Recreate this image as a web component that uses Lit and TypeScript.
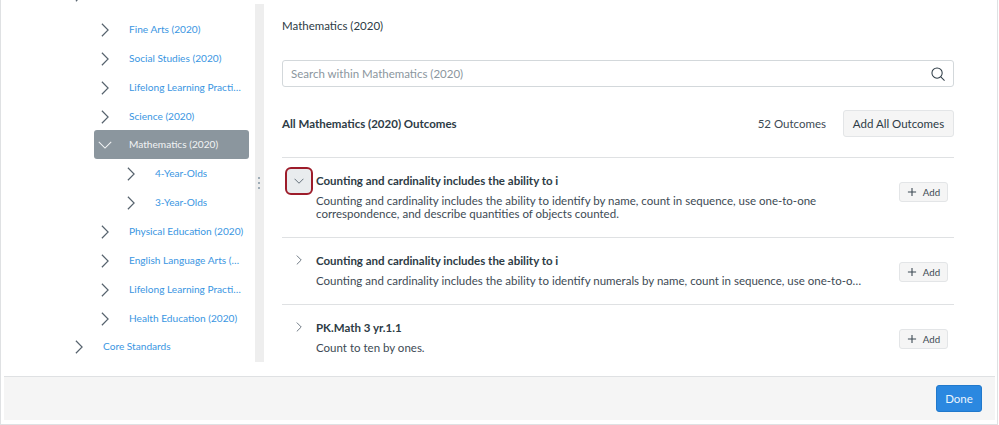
import { LitElement, html, css, svg } from "lit";
import { customElement } from "lit/decorators.js";

const chevRight = svg`<polyline points="1,1 9,9 1,17" fill="none" stroke="currentColor" stroke-width="1.5"/>`;
const chevDown = svg`<polyline points="1,1 9,9 17,1" fill="none" stroke="currentColor" stroke-width="1.3"/>`;

interface TreeRow { label: string; level: number; active?: boolean; }

const stub: TreeRow = { label: "Learning Standards and Early Years (2020)", level: 0 };

const rows: TreeRow[] = [
  { label: "Fine Arts (2020)", level: 1 },
  { label: "Social Studies (2020)", level: 1 },
  { label: "Lifelong Learning Practices (2020)", level: 1 },
  { label: "Science (2020)", level: 1 },
  { label: "Mathematics (2020)", level: 1, active: true },
  { label: "4-Year-Olds", level: 2 },
  { label: "3-Year-Olds", level: 2 },
  { label: "Physical Education (2020)", level: 1 },
  { label: "English Language Arts (2020)", level: 1 },
  { label: "Lifelong Learning Practices (2020)", level: 1 },
  { label: "Health Education (2020)", level: 1 },
  { label: "Core Standards", level: 0 },
];

const outcomes = [
  {
    title: "Counting and cardinality includes the ability to i",
    open: true,
    desc: "Counting and cardinality includes the ability to identify by name, count in sequence, use one-to-one correspondence, and describe quantities of objects counted.",
  },
  {
    title: "Counting and cardinality includes the ability to i",
    open: false,
    desc: "Counting and cardinality includes the ability to identify numerals by name, count in sequence, use one-to-one correspondence, and describe quantities.",
  },
  { title: "PK.Math 3 yr.1.1", open: false, desc: "Count to ten by ones." },
];

@customElement("app-root")
export class AppRoot extends LitElement {
  static styles = css`
    :host {
      display: block;
      width: 999px;
      height: 425px;
      overflow: hidden;
      box-sizing: border-box;
      background: #fff;
      font-family: Lato, "Liberation Sans", sans-serif;
      color: #2d3b45;
    }
    .frame {
      box-sizing: border-box;
      width: 998px;
      height: 425px;
      border: 1px solid #dfe1e3;
      border-top: none;
      padding: 0 2px 3px 3px;
      display: flex;
      flex-direction: column;
    }
    .main {
      height: 376px;
      flex: none;
      display: flex;
      overflow: hidden;
    }
    .tree {
      width: 251px;
      flex: none;
      height: 376px;
      overflow: hidden;
    }
    .stub {
      height: 14.5px;
      overflow: hidden;
    }
    .stub .tree-row {
      margin-top: -20.5px;
    }
    .tree-row {
      height: 28.87px;
      display: flex;
      align-items: center;
      box-sizing: border-box;
      font-size: 10.15px;
      color: #3a96e2;
    }
    .tree-row .arrow {
      color: #56626d;
      flex: none;
      display: flex;
      padding-top: 2px;
    }
    .tree-row .label {
      white-space: nowrap;
      overflow: hidden;
      text-overflow: ellipsis;
    }
    .l0 { padding-left: 71px; }
    .l0 .arrow { width: 28px; }
    .l0 .label { width: 140px; }
    .l1 { padding-left: 97px; }
    .l1 .arrow { width: 28px; }
    .l1 .label { width: 115px; }
    .l2 { padding-left: 123px; }
    .l2 .arrow { width: 28px; }
    .active {
      margin-left: 90px;
      width: 155px;
      padding-left: 4px;
      background: #8b969e;
      border-radius: 3px;
      color: #f2f4f5;
    }
    .active .arrow {
      color: #f2f4f5;
      width: 31px;
    }
    .grip-bar {
      width: 9px;
      flex: none;
      height: 358px;
      margin-top: 4px;
      background: #eeeeee;
      position: relative;
    }
    .dots {
      position: absolute;
      top: 173px;
      left: 3px;
      display: flex;
      flex-direction: column;
      gap: 3.5px;
    }
    .dots i {
      width: 1.5px;
      height: 1.5px;
      background: #8fa0ac;
      border-radius: 50%;
      display: block;
    }
    .content {
      flex: none;
      width: 672px;
      margin-left: 18px;
      padding-top: 18px;
      box-sizing: border-box;
    }
    .crumb {
      font-size: 11.5px;
      line-height: 16px;
    }
    .search {
      margin-top: 26px;
      height: 27px;
      box-sizing: border-box;
      border: 1px solid #d3d8db;
      border-radius: 3px;
      display: flex;
      align-items: center;
      justify-content: space-between;
      padding: 0 8px 0 8px;
      font-size: 11.5px;
      color: #8b969e;
    }
    .search svg { color: #2d3b45; }
    .head {
      margin-top: 23px;
      height: 27px;
      display: flex;
      align-items: center;
      font-size: 11.5px;
    }
    .head b {
      font-weight: 700;
      flex: 1;
    }
    .count {
      font-size: 11.5px;
      margin-right: 17px;
      color: #3d4a54;
    }
    .btn-all {
      width: 111px;
      height: 27px;
      box-sizing: border-box;
      background: #f5f5f5;
      border: 1px solid #e3e5e7;
      border-radius: 3px;
      display: flex;
      align-items: center;
      justify-content: center;
      font-size: 11.5px;
    }
    .outcome {
      border-top: 1px solid #dfe1e3;
      display: flex;
      box-sizing: border-box;
      position: relative;
    }
    .o0 { margin-top: 20px; height: 80px; padding-top: 9px; }
    .o1 { height: 67px; padding-top: 15px; }
    .o2 { height: 67px; padding-top: 15px; }
    .toggle {
      width: 34px;
      flex: none;
      display: flex;
      justify-content: center;
      color: #56626d;
    }
    .toggle.plain { padding-top: 2px; box-sizing: border-box; height: 18px; }
    .toggle .focus {
      width: 28px;
      height: 28px;
      box-sizing: border-box;
      border: 2.5px solid #9d1c2a;
      border-radius: 6px;
      background: #e9ecee;
      display: flex;
      align-items: center;
      justify-content: center;
      flex: none;
    }
    .text {
      flex: none;
      width: 547px;
    }
    .o0 .text { padding-top: 6px; }
    .title {
      font-size: 11.5px;
      font-weight: 700;
      line-height: 16px;
    }
    .desc {
      font-size: 11.5px;
      color: #3d4a54;
      line-height: 13px;
    }
    .desc.short {
      white-space: nowrap;
      overflow: hidden;
      text-overflow: ellipsis;
      line-height: 16px;
      margin-top: 4px;
    }
    .o0 .desc { margin-top: 5px; }
    .add {
      position: absolute;
      left: 617px;
      top: 24px;
      width: 49px;
      height: 20px;
      box-sizing: border-box;
      background: #f5f5f5;
      border: 1px solid #e3e5e7;
      border-radius: 3px;
      display: flex;
      align-items: center;
      justify-content: center;
      gap: 6px;
      font-size: 9.7px;
      color: #3d4a54;
    }
    .footer {
      height: 44px;
      flex: none;
      box-sizing: border-box;
      background: #f5f5f5;
      border-top: 1px solid #dfe1e3;
      display: flex;
      align-items: center;
      justify-content: flex-end;
      padding: 0 13px 0 0;
    }
    .done {
      width: 46px;
      height: 27px;
      box-sizing: border-box;
      background: #2b88e0;
      border: 1px solid #2179cc;
      border-radius: 3px;
      color: #eaf4fd;
      font-size: 11.5px;
      display: flex;
      align-items: center;
      justify-content: center;
    }
  `;

  private treeRow(r: TreeRow) {
    const cls = `tree-row l${r.level}${r.active ? " active" : ""}`;
    return html`<div class=${cls}>
      <span class="arrow">
        ${r.active
          ? html`<svg width="14" height="8" viewBox="0 0 18 10">${chevDown}</svg>`
          : html`<svg width="8" height="14" viewBox="0 0 10 18">${chevRight}</svg>`}
      </span>
      <span class="label">${r.label}</span>
    </div>`;
  }

  private addBtn() {
    return html`<div class="add">
      <svg width="10" height="10" viewBox="0 0 11 11"><path d="M5.5 1v9M1 5.5h9" fill="none" stroke="#3d4a54" stroke-width="1.2"/></svg>
      <span>Add</span>
    </div>`;
  }

  render() {
    return html`<div class="frame">
      <div class="main">
        <div class="tree">
          <div class="stub">${this.treeRow(stub)}</div>
          ${rows.map((r) => this.treeRow(r))}
        </div>
        <div class="grip-bar">
          <div class="dots"><i></i><i></i><i></i></div>
        </div>
        <div class="content">
          <div class="crumb">Mathematics (2020)</div>
          <div class="search">
            <span>Search within Mathematics (2020)</span>
            <svg width="14" height="14" viewBox="0 0 15 15" fill="none" stroke="currentColor" stroke-width="1.1">
              <circle cx="6.5" cy="6.5" r="5.5"/>
              <path d="M10.5 10.5l4 4"/>
            </svg>
          </div>
          <div class="head">
            <b>All Mathematics (2020) Outcomes</b>
            <span class="count">52 Outcomes</span>
            <div class="btn-all">Add All Outcomes</div>
          </div>
          ${outcomes.map(
            (o, i) => html`<div class="outcome o${i}">
              ${o.open
                ? html`<div class="toggle"><div class="focus">
                    <svg width="10" height="6" viewBox="0 0 18 10"><polyline points="1,1 9,9 17,1" fill="none" stroke="currentColor" stroke-width="1.6"/></svg>
                  </div></div>`
                : html`<div class="toggle plain">
                    <svg width="6" height="10" viewBox="0 0 10 18"><polyline points="1,1 9,9 1,17" fill="none" stroke="currentColor" stroke-width="1.5"/></svg>
                  </div>`}
              <div class="text">
                <div class="title">${o.title}</div>
                <div class="desc ${o.open ? "" : "short"}">${o.desc}</div>
              </div>
              ${this.addBtn()}
            </div>`
          )}
        </div>
      </div>
      <div class="footer"><div class="done">Done</div></div>
    </div>`;
  }
}
